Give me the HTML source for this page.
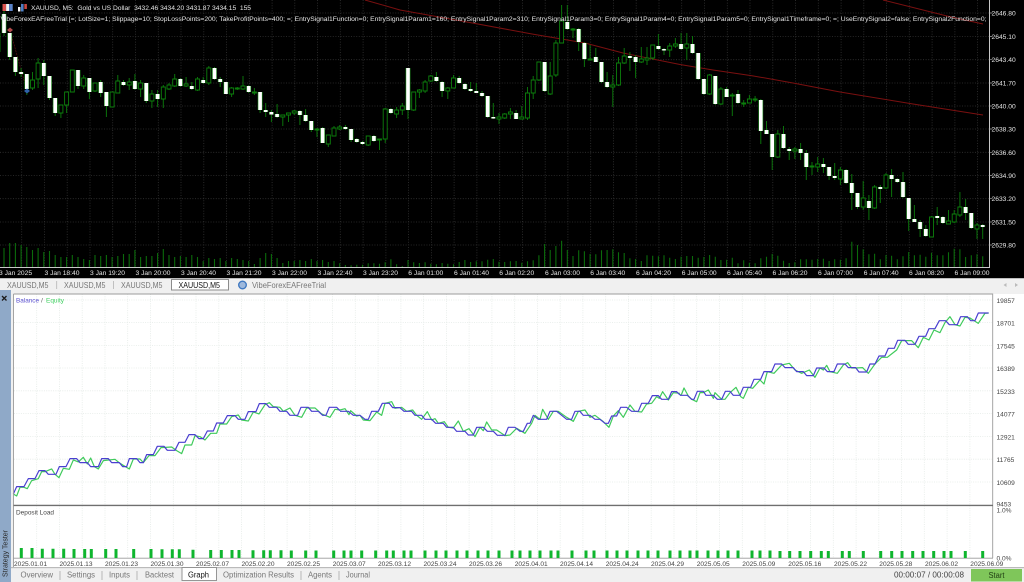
<!DOCTYPE html>
<html><head><meta charset="utf-8"><title>Strategy Tester</title>
<style>
html,body{margin:0;padding:0;background:#f0f0f0;width:1024px;height:582px;overflow:hidden}
svg{display:block;filter:blur(.25px)}
text{font-family:"Liberation Sans",sans-serif}
.c{font-size:6.7px;fill:#e6e6e6}
.a{font-size:6.6px;fill:#444}
.t{font-size:8px;fill:#777}
</style></head><body>
<svg width="1024" height="582" viewBox="0 0 1024 582" xmlns="http://www.w3.org/2000/svg">
<defs>
<path id="w" d="M4 14V33M9.7 33V57M15.4 57V72M21.1 72V74M26.8 74V89M43.8 63V76M49.5 76V98M55.2 98V113M78 70V86M89.4 78V92M100.7 82V93M106.4 92V106M123.5 82V85M134.9 81V89M146.3 83V101M157.6 94V99M180.4 79V86M191.8 86V89M203.2 80V83M214.5 68V79M220.2 79V82M225.9 82V94M248.7 86V92M260.1 92V110M265.7 110V112M271.4 112V114.5M277.1 114V117M299.9 111V115M305.6 115V121M311.3 121V130M322.6 128V143M345.4 127V129M351.1 129V140M356.8 139V142M362.5 142V144M373.9 136V141M390.9 109V113M408 68V110M436.4 77V81M442.1 82V91M459.2 78V83M464.9 84V89M470.6 89V91M476.3 91V93M482 93V96M487.7 96V117M493.3 117V118.5M516.1 113V119M544.6 62V91M567.3 22V29M578.7 29V42M584.4 43V59M595.8 57V62M601.5 62V82M607.1 82V87M629.9 56V58M635.6 57V62M658.4 46V49M664 49V50.5M681.1 44V49M692.5 44V53M698.2 53V79M703.9 79V94M715.3 76V104M726.6 89V97M738 94V103M760.8 100V131M766.5 130V134M772.2 134V157M783.5 134V148M789.2 149V151M800.6 149V153M806.3 153V167M823.4 164V167M829.1 167V176M834.7 176V178M846.1 170V183M851.8 183V193M857.5 193V207M868.9 201V208M880.3 187V189M891.6 175V179M897.3 179V182M903 182V197M908.7 198V219M914.4 219V222M920.1 222V229M925.8 229V236M937.2 216V218M942.9 217V223M965.6 207V213M971.3 213V228M982.7 225V227"/>
</defs>
<!-- chart -->
<rect x="0" y="0" width="1024" height="278" fill="#000"/>
<path fill="none" stroke="#333" stroke-width=".8" stroke-dasharray="1 1.6" d="M0 13H989M0 36.5H989M0 59.7H989M0 83H989M0 106H989M0 129H989M0 152.3H989M0 175.5H989M0 198.7H989M0 222H989M0 245H989M21.7 0V267M44.5 0V267M67.2 0V267M90 0V267M112.7 0V267M135.5 0V267M158.3 0V267M181 0V267M203.8 0V267M226.5 0V267M249.3 0V267M272.1 0V267M294.8 0V267M317.6 0V267M340.3 0V267M363.1 0V267M385.9 0V267M408.6 0V267M431.4 0V267M454.1 0V267M476.9 0V267M499.7 0V267M522.4 0V267M545.2 0V267M567.9 0V267M590.7 0V267M613.5 0V267M636.2 0V267M659 0V267M681.7 0V267M704.5 0V267M727.3 0V267M750 0V267M772.8 0V267M795.5 0V267M818.3 0V267M841.1 0V267M863.8 0V267M886.6 0V267M909.3 0V267M932.1 0V267M954.9 0V267M977.6 0V267"/>
<!-- volumes -->
<path fill="none" stroke="#0b6b0b" stroke-width="1.1" d="M4 248V267.5M9.7 243V267.5M15.4 243V267.5M21.1 245V267.5M26.8 247V267.5M32.5 250V267.5M38.1 248V267.5M43.8 252V267.5M49.5 251V267.5M55.2 255V267.5M60.9 257V267.5M66.6 257V267.5M72.3 255V267.5M78 257V267.5M83.7 259V267.5M89.4 260V267.5M95 255V267.5M100.7 256V267.5M106.4 255V267.5M112.1 257V267.5M117.8 256V267.5M123.5 254V267.5M129.2 254V267.5M134.9 250V267.5M140.6 257V267.5M146.3 256V267.5M151.9 256V267.5M157.6 253V267.5M163.3 249V267.5M169 255V267.5M174.7 257V267.5M180.4 256V267.5M186.1 257V267.5M191.8 255V267.5M197.5 257V267.5M203.2 261V267.5M208.8 258V267.5M214.5 259V267.5M220.2 258V267.5M225.9 261V267.5M231.6 258V267.5M237.3 259V267.5M243 260V267.5M248.7 261V267.5M254.4 264V267.5M260.1 258V267.5M265.7 253V267.5M271.4 254V267.5M277.1 258V267.5M282.8 263V267.5M288.5 261V267.5M294.2 261V267.5M299.9 260V267.5M305.6 261V267.5M311.3 259V267.5M317 261V267.5M322.6 260V267.5M328.3 262V267.5M334 261V267.5M339.7 263.3V267.5M345.4 265V267.5M351.1 265.3V267.5M356.8 264.7V267.5M362.5 264.7V267.5M368.2 263.3V267.5M373.9 263.3V267.5M379.5 263.7V267.5M385.2 262.3V267.5M390.9 259.3V267.5M396.6 264.3V267.5M402.3 266V267.5M408 260V267.5M413.7 262.3V267.5M419.4 263V267.5M425.1 262.3V267.5M430.8 263.7V267.5M436.4 264.3V267.5M442.1 263V267.5M447.8 263.7V267.5M453.5 264.3V267.5M459.2 262V267.5M464.9 260V267.5M470.6 262V267.5M476.3 261.3V267.5M482 261.3V267.5M487.7 259.7V267.5M493.3 259V267.5M499 261.7V267.5M504.7 262V267.5M510.4 261.3V267.5M516.1 261V267.5M521.8 262.7V267.5M527.5 261.3V267.5M533.2 260.3V267.5M538.9 255.3V267.5M544.6 244V267.5M550.2 250V267.5M555.9 246V267.5M561.6 240.7V267.5M567.3 250V267.5M573 256V267.5M578.7 250.3V267.5M584.4 251.3V267.5M590.1 254V267.5M595.8 254.3V267.5M601.5 250.3V267.5M607.1 250V267.5M612.8 249.3V267.5M618.5 252.3V267.5M624.2 253V267.5M629.9 258.3V267.5M635.6 259V267.5M641.3 261V267.5M647 255.3V267.5M652.7 255.7V267.5M658.4 256.3V267.5M664 255.3V267.5M669.7 257.7V267.5M675.4 259V267.5M681.1 256.7V267.5M686.8 256V267.5M692.5 256V267.5M698.2 257.7V267.5M703.9 257V267.5M709.6 255V267.5M715.3 256.7V267.5M720.9 260V267.5M726.6 259.7V267.5M732.3 257.7V267.5M738 263.3V267.5M743.7 260.3V267.5M749.4 262.7V267.5M755.1 263.3V267.5M760.8 258.3V267.5M766.5 256.7V267.5M772.2 254V267.5M777.8 255.7V267.5M783.5 260.7V267.5M789.2 263V267.5M794.9 262.3V267.5M800.6 259.3V267.5M806.3 259.3V267.5M812 259.7V267.5M817.7 259V267.5M823.4 258.7V267.5M829.1 261V267.5M834.7 259.3V267.5M840.4 259.7V267.5M846.1 258.3V267.5M851.8 241.7V267.5M857.5 245V267.5M863.2 249.3V267.5M868.9 254.3V267.5M874.6 253.7V267.5M880.3 259.3V267.5M886 255V267.5M891.6 255.7V267.5M897.3 259.3V267.5M903 256.3V267.5M908.7 252V267.5M914.4 255.3V267.5M920.1 254.7V267.5M925.8 256.7V267.5M931.5 252.7V267.5M937.2 255.3V267.5M942.9 255.3V267.5M948.5 252.3V267.5M954.2 248.7V267.5M959.9 249.3V267.5M965.6 257V267.5M971.3 255.3V267.5M977 254.3V267.5M982.7 256.3V267.5"/>
<!-- red lines -->
<path fill="none" stroke="#7a1010" stroke-width="1" d="M365 0L400 10L467 22L532 34L585 43L623 53L680 64.5L713 70L752 75.7L793 83L840 92L913 104L983 115M883 0L947 16L983 24"/>
<path fill="none" stroke="#6a1515" stroke-width=".6" stroke-dasharray="2 1" d="M10 30L27 91"/>
<!-- wicks -->
<path fill="none" stroke="#0a720a" stroke-width="1" d="M0 33V52M4 10V36M9.7 33V60M15.4 57V76M21.1 68V77M26.8 74V95M32.5 72V90M38.1 58V88M43.8 60V85M49.5 76V100M55.2 98V116M60.9 105V118M66.6 92V113M72.3 70V92M78 70V89M83.7 75V89M89.4 78V99M95 83V92M100.7 80V97M106.4 92V117M112.1 92V107M117.8 75V93M123.5 80V86M129.2 78V90M134.9 74V90M140.6 80V97M146.3 83V103M151.9 90V108M157.6 90V107M163.3 85V108M169 83V90M174.7 74V87M180.4 78V87M186.1 77V87M191.8 82V90M197.5 77V91M203.2 77V84M208.8 66V85M214.5 67V80M220.2 77V87M225.9 82V94M231.6 87V97M237.3 87V90M243 76V90M248.7 85V93M254.4 88V95M260.1 92V113M265.7 103V117M271.4 110V122M277.1 104V118M282.8 115V126M288.5 113V122M294.2 110V115M299.9 110V125M305.6 109V122M311.3 121V132M317 128V137M322.6 127V143M328.3 135V147M334 126V136M339.7 125V130M345.4 125V130M351.1 129V142M356.8 138V143M362.5 141V145M368.2 136V146M373.9 135V142M379.5 139V150M385.2 108V143M390.9 108V114M396.6 107V118M402.3 103V115M408 68V119M413.7 92V111M419.4 89V98M425.1 80V93M430.8 75V82M436.4 72V82M442.1 81V97M447.8 87V99M453.5 75V88M459.2 76V84M464.9 83V90M470.6 82V92M476.3 83V93M482 91V97M487.7 96V118M493.3 103V119M499 113V124M504.7 113V119M510.4 108V119M516.1 110V119M521.8 106V119M527.5 87V120M533.2 76V99M538.9 62V81M544.6 62V92M550.2 62V95M555.9 40V77M561.6 5V43M567.3 5V30M573 28V38M578.7 28V51M584.4 42V67M590.1 45V60M595.8 48V62M601.5 62V83M607.1 72V88M612.8 75V107M618.5 57V86M624.2 48V64M629.9 52V71M635.6 55V78M641.3 47V63M647 47V65M652.7 45V60M658.4 34V50M664 48V55M669.7 43V57M675.4 38V48M681.1 33V50M686.8 33V60M692.5 36V54M698.2 53V80M703.9 79V95M709.6 74V95M715.3 76V105M720.9 87V105M726.6 87V97M732.3 93V116M738 90V104M743.7 100V107M749.4 95V103M755.1 96V102M760.8 99V144M766.5 121V134M772.2 134V170M777.8 130V158M783.5 126V149M789.2 147V160M794.9 147V159M800.6 143V160M806.3 150V180M812 162V175M817.7 157V172M823.4 158V173M829.1 167V180M834.7 163V180M840.4 167V185M846.1 169V184M851.8 174V210M857.5 193V209M863.2 181V210M868.9 195V220M874.6 185V209M880.3 185V203M886 173V189M891.6 169V197M897.3 178V183M903 172V198M908.7 198V231M914.4 205V222M920.1 220V237M925.8 225V237M931.5 216V237M937.2 207V225M942.9 216V224M948.5 210V224M954.2 210V223M959.9 192V217M965.6 199V220M971.3 213V229M977 223V239M982.7 224V239"/>
<!-- bullish hollow bodies -->
<path fill="#000" stroke="#0c7f0c" stroke-width=".9" d="M32.5 80h2V88h-4V80zM38.1 63h2V79h-4V63zM60.9 105h2V113h-4V105zM66.6 92h2V105h-4V92zM72.3 70h2V92h-4V70zM83.7 78h2V86h-4V78zM95 83h2V91h-4V83zM112.1 92h2V107h-4V92zM117.8 81h2V93h-4V81zM129.2 82h2V85h-4V82zM140.6 83h2V89h-4V83zM151.9 94h2V101h-4V94zM163.3 87h2V99h-4V87zM169 85h2V89h-4V85zM174.7 79h2V86h-4V79zM186.1 84h2V86h-4V84zM197.5 79h2V90h-4V79zM208.8 68h2V83h-4V68zM231.6 88h2V94h-4V88zM237.3 88h2V89h-4V88zM243 86h2V89h-4V86zM254.4 92h2V93h-4V92zM282.8 115h2V117h-4V115zM288.5 113h2V115h-4V113zM294.2 111h2V113h-4V111zM317 129h2V130h-4V129zM328.3 135h2V144h-4V135zM334 128h2V136h-4V128zM339.7 127h2V129h-4V127zM368.2 136h2V145h-4V136zM379.5 139h2V140h-4V139zM385.2 109h2V139h-4V109zM396.6 110h2V114h-4V110zM402.3 106h2V110h-4V106zM413.7 92h2V110h-4V92zM419.4 90h2V92h-4V90zM425.1 82h2V91h-4V82zM430.8 76h2V81h-4V76zM447.8 88h2V91h-4V88zM453.5 78h2V88h-4V78zM499 117h2V119h-4V117zM504.7 114h2V118h-4V114zM510.4 112h2V114h-4V112zM521.8 117h2V119h-4V117zM527.5 93h2V118h-4V93zM533.2 80h2V93h-4V80zM538.9 62h2V80h-4V62zM550.2 76h2V94h-4V76zM555.9 43h2V75h-4V43zM561.6 21h2V43h-4V21zM573 29h2V30h-4V29zM590.1 59h2V60h-4V59zM612.8 85h2V87h-4V85zM618.5 63h2V85h-4V63zM624.2 56h2V63h-4V56zM641.3 59h2V62h-4V59zM647 58h2V60h-4V58zM652.7 45h2V58h-4V45zM669.7 46h2V50h-4V46zM675.4 44h2V46h-4V44zM686.8 44h2V48h-4V44zM709.6 75h2V94h-4V75zM720.9 89h2V104h-4V89zM732.3 95h2V96h-4V95zM743.7 103h2V104h-4V103zM749.4 99h2V103h-4V99zM755.1 99h2V100h-4V99zM777.8 134h2V157h-4V134zM794.9 149h2V151h-4V149zM812 166h2V167h-4V166zM817.7 164h2V167h-4V164zM840.4 170h2V179h-4V170zM863.2 198h2V207h-4V198zM874.6 187h2V208h-4V187zM886 175h2V188h-4V175zM931.5 217h2V237h-4V217zM948.5 221h2V224h-4V221zM954.2 214h2V222h-4V214zM959.9 207h2V215h-4V207zM977 225h2V229h-4V225z"/>
<!-- bearish white bodies -->
<use href="#w" fill="none" stroke="#1d8f1d" stroke-width="4.8"/>
<use href="#w" fill="none" stroke="#fff" stroke-width="3.6"/>
<!-- markers -->
<path d="M10 27.5l3 2.5-3 2.5-3-2.5z" fill="#b24a4a"/>
<path d="M27 88.5l3 2.5-3 2.5-3-2.5z" fill="#2f62a8"/>
<!-- axes -->
<path d="M989.5 0V267.5H0" fill="none" stroke="#c8c8c8" stroke-width="1"/>
<path d="M989.5 13h3M989.5 36.5h3M989.5 59.7h3M989.5 83h3M989.5 106h3M989.5 129h3M989.5 152.3h3M989.5 175.5h3M989.5 198.7h3M989.5 222h3M989.5 245h3" stroke="#aaa" stroke-width=".7"/>
<!-- header icons + text -->
<rect x="2.5" y="4" width="3.6" height="7" fill="#d9534f"/><rect x="6.1" y="4" width="3" height="7" fill="#f2f2f2"/><rect x="9.1" y="4" width="3.6" height="7" fill="#5b83c9"/>
<rect x="18" y="7" width="2.4" height="4.5" fill="#fff"/><rect x="21" y="4" width="2.6" height="7.5" fill="#4d7fc4"/><rect x="24.3" y="4" width="2.6" height="5" fill="#c9463f"/>
<text class="c" x="31" y="10" textLength="220" lengthAdjust="spacingAndGlyphs" xml:space="preserve">XAUUSD, M5:  Gold vs US Dollar  3432.46 3434.20 3431.87 3434.15  155</text>
<text class="c" x="0.5" y="21" textLength="986" lengthAdjust="spacingAndGlyphs">VibeForexEAFreeTrial [=; LotSize=1; Slippage=10; StopLossPoints=200; TakeProfitPoints=400; =; EntrySignal1Function=0; EntrySignal1Param1=160; EntrySignal1Param2=310; EntrySignal1Param3=0; EntrySignal1Param4=0; EntrySignal1Param5=0; EntrySignal1Timeframe=0; =; UseEntrySignal2=false; EntrySignal2Function=0;</text>
<!-- price labels -->
<g class="c" style="font-size:6.7px;fill:#e6e6e6">
<text x="991.5" y="15.5">2646.80</text><text x="991.5" y="39">2645.10</text><text x="991.5" y="62.2">2643.40</text><text x="991.5" y="85.5">2641.70</text><text x="991.5" y="108.5">2640.00</text><text x="991.5" y="131.5">2638.30</text><text x="991.5" y="154.8">2636.60</text><text x="991.5" y="178">2634.90</text><text x="991.5" y="201.2">2633.20</text><text x="991.5" y="224.5">2631.50</text><text x="991.5" y="247.5">2629.80</text>
</g>
<!-- time labels -->
<g style="font-size:6.7px;fill:#e6e6e6">
<text x="-1" y="275">3 Jan 2025</text><text x="44.5" y="275">3 Jan 18:40</text><text x="90" y="275">3 Jan 19:20</text><text x="135.5" y="275">3 Jan 20:00</text><text x="181" y="275">3 Jan 20:40</text><text x="226.5" y="275">3 Jan 21:20</text><text x="272" y="275">3 Jan 22:00</text><text x="317.5" y="275">3 Jan 22:40</text><text x="363" y="275">3 Jan 23:20</text><text x="408.3" y="275">6 Jan 01:00</text><text x="454" y="275">6 Jan 01:40</text><text x="499.3" y="275">6 Jan 02:20</text><text x="545" y="275">6 Jan 03:00</text><text x="590.3" y="275">6 Jan 03:40</text><text x="636" y="275">6 Jan 04:20</text><text x="681.7" y="275">6 Jan 05:00</text><text x="727" y="275">6 Jan 05:40</text><text x="772.5" y="275">6 Jan 06:20</text><text x="818" y="275">6 Jan 07:00</text><text x="863.7" y="275">6 Jan 07:40</text><text x="909" y="275">6 Jan 08:20</text><text x="954.5" y="275">6 Jan 09:00</text>
</g>
<!-- chart tabs -->
<rect x="0" y="278" width="1024" height="16" fill="#f0f0f0"/>
<path d="M0 278.5H1024" stroke="#bdbdbd" stroke-width="1"/>
<text class="t" x="7" y="288" textLength="41.5" lengthAdjust="spacingAndGlyphs">XAUUSD,M5</text>
<text class="t" x="64" y="288" textLength="41.5" lengthAdjust="spacingAndGlyphs">XAUUSD,M5</text>
<text class="t" x="121" y="288" textLength="41.5" lengthAdjust="spacingAndGlyphs">XAUUSD,M5</text>
<path d="M56.7 281V289M113.5 281V289" stroke="#b5b5b5" stroke-width=".8"/>
<rect x="171.5" y="279.5" width="57" height="10.5" fill="#fff" stroke="#8c8c8c" stroke-width="1"/>
<text x="178.5" y="288" font-size="8" fill="#111" textLength="41.5" lengthAdjust="spacingAndGlyphs">XAUUSD,M5</text>
<circle cx="242.5" cy="285" r="3.8" fill="#9db8dc" stroke="#3f78c0" stroke-width="1.4"/>
<text class="t" x="252" y="288" textLength="74" lengthAdjust="spacingAndGlyphs">VibeForexEAFreeTrial</text>
<path d="M1006.5 283v4l-3-2zM1015 283v4l3-2z" fill="#bbb"/>
<!-- side panel -->
<rect x="0" y="290" width="11" height="292" fill="#8fa9c8"/>
<path d="M2 296l4.5 4.5M6.5 296L2 300.5" stroke="#1c1c1c" stroke-width="1.3" fill="none"/>
<text x="0" y="0" transform="translate(7.5,577) rotate(-90)" font-size="7.6" fill="#2a2a2a" textLength="47" lengthAdjust="spacingAndGlyphs">Strategy Tester</text>
<!-- graph -->
<rect x="13.5" y="294" width="979" height="273" fill="#fff"/>
<rect x="993" y="294" width="31" height="273" fill="#fff"/>
<path fill="none" stroke="#e4eae6" stroke-width=".8" stroke-dasharray="1 1.3" d="M14 300H992M14 322.5H992M14 345.4H992M14 368H992M14 390.8H992M14 413.6H992M14 436.4H992M14 459.2H992M14 482H992M36.7 294V558M59.5 294V558M82.2 294V558M105 294V558M127.7 294V558M150.5 294V558M173.3 294V558M196 294V558M218.8 294V558M241.5 294V558M264.3 294V558M287.1 294V558M309.8 294V558M332.6 294V558M355.3 294V558M378.1 294V558M400.9 294V558M423.6 294V558M446.4 294V558M469.1 294V558M491.9 294V558M514.7 294V558M537.4 294V558M560.2 294V558M582.9 294V558M605.7 294V558M628.5 294V558M651.2 294V558M674 294V558M696.7 294V558M719.5 294V558M742.3 294V558M765 294V558M787.8 294V558M810.5 294V558M833.3 294V558M856.1 294V558M878.8 294V558M901.6 294V558M924.3 294V558M947.1 294V558M969.9 294V558"/>
<!-- equity -->
<g fill="none" stroke="#3fca5b" stroke-width="3.6" stroke-linejoin="round">
<path transform="translate(0,290) scale(.3333)" d="M40 612L50 618L60 592L72 592L82 596L95 572L115 566L125 545L135 545L155 537L165 553L177 563L190 535L208 538L220 510L235 516L250 502L262 522L272 504L283 530L295 537L310 512L345 508L360 520L388 537L400 507L420 507L430 518L447 497L465 497L483 473L515 471L530 482L545 491L555 465L575 465L585 437L600 440L615 450L632 430L650 430L660 402L680 402L695 380L715 375L725 390L745 393L760 366L777 372L795 344L808 338L820 350L840 352L850 364L870 354L885 376L905 382L920 354L945 354L965 372L990 382L1005 358L1020 360"/>
<path transform="translate(340,340) scale(.3333)" d="M0 210L15 206L27 224L32 212L50 228L60 226L70 240L90 242L110 216L125 226L135 190L155 185L165 205L185 202L200 214L218 210L230 226L245 238L262 215L275 240L285 236L295 250L313 245L325 262L340 264L355 243L370 274L387 266L405 290L420 262L430 272L440 246L455 270L470 270L495 287L510 285L530 265L555 280L575 250L585 226L600 238L608 208L625 238L640 214L655 214L680 232L700 244L715 214L735 210L750 232L765 226L790 245L807 262L820 228L835 212L850 232L870 195L885 214L905 216L920 192L935 190L950 170L958 175L968 155L985 180L1000 158L1020 160"/>
<path transform="translate(680,290) scale(.3333)" d="M0 316L5 312L12 294L25 318L35 328L50 335L60 308L70 308L85 300L100 325L105 308L125 328L135 328L150 308L168 292L182 320L190 325L205 292L218 295L240 270L252 282L262 245L282 250L305 225L328 220L345 240L365 250L388 240L405 262L420 234L430 240L440 226L450 245L472 250L490 225L503 218L515 234L527 234L548 233L565 250L585 222L605 202L622 202L650 180L665 152L695 152L715 173L730 142L747 150L762 120L780 128L795 98L810 80L825 104L840 108L855 82L870 84L895 100L915 70L926 69"/>
</g>
<!-- balance -->
<g fill="none" stroke="#4a3fd0" stroke-width="3.6" stroke-linejoin="round">
<path transform="translate(0,290) scale(.3333)" d="M40 612L50 590L72 590L85 566L105 566L117 542L135 542L145 553L168 553L178 530L198 530L210 506L230 506L240 518L262 518L272 530L295 530L305 506L325 506L335 518L358 518L368 530L380 530L388 506L410 506L420 518L430 518L440 494L460 494L472 469L492 469L502 481L525 481L537 457L555 457L567 434L585 434L597 446L610 446L622 423L640 423L650 399L670 399L682 377L705 377L715 388L735 388L745 365L768 365L778 341L798 341L808 352L830 352L840 364L860 364L870 376L893 376L903 352L925 352L935 364L955 364L968 376L978 376L988 352L1010 352L1020 362"/>
<path transform="translate(340,340) scale(.3333)" d="M0 214L25 214L40 226L60 226L75 238L85 238L95 214L115 214L127 190L148 190L158 203L180 203L192 214L215 214L225 226L245 226L255 238L275 238L287 250L310 250L320 262L340 262L350 274L375 274L385 285L400 285L410 262L430 262L442 274L460 274L472 286L495 286L505 262L525 262L540 274L550 274L562 250L570 250L580 226L595 238L620 238L630 214L650 214L665 226L680 238L695 238L705 214L720 214L730 226L750 226L765 238L780 238L795 250L805 250L815 228L830 228L842 202L860 202L875 214L895 214L905 190L925 190L937 167L955 167L965 178L985 178L995 155L1010 155L1020 165"/>
<path transform="translate(680,290) scale(.3333)" d="M0 316L22 316L35 328L42 328L52 304L70 304L78 316L100 316L112 328L125 328L136 304L150 304L160 316L180 316L190 292L212 292L222 268L242 268L252 245L275 245L285 222L305 222L315 233L340 233L350 245L370 245L380 257L400 257L410 234L432 234L442 245L462 245L472 222L495 222L505 233L527 233L537 246L560 246L570 222L585 222L597 198L615 198L625 175L643 175L653 151L675 151L685 163L705 163L717 139L737 139L747 116L765 116L778 92L797 92L808 104L832 104L842 80L862 80L872 92L885 92L895 69L926 69"/>
</g>
<text x="16" y="302.5" font-size="6.8" fill="#5a4fd0" textLength="23" lengthAdjust="spacingAndGlyphs">Balance</text>
<text x="41" y="302.5" font-size="6.8" fill="#666">/</text>
<text x="46" y="302.5" font-size="6.8" fill="#3ecf5f" textLength="18" lengthAdjust="spacingAndGlyphs">Equity</text>
<!-- separator & frame -->
<path d="M13.5 294H992.7V558" fill="none" stroke="#9b9b9b" stroke-width=".9"/>
<path d="M13.5 294V567" stroke="#9b9b9b" stroke-width=".9"/>
<path d="M13.5 505.4H993" stroke="#6f6f6f" stroke-width="1.4"/>
<path d="M13.5 558.2H993" stroke="#9a9a9a" stroke-width=".8"/>
<text x="16" y="514.5" font-size="6.8" fill="#444" textLength="38" lengthAdjust="spacingAndGlyphs">Deposit Load</text>
<!-- load bars -->
<path fill="none" stroke="#0fb52e" stroke-width="3" d="M21.3 548V558M32 548V558M42.3 548.8V558M53 548.8V558M63.7 548.8V558M74 549V558M84.7 549V558M91.3 549V558M105.7 549V558M116 549V558M133.7 549V558M151 549V558M162 549.3V558M172.3 549.3V558M179.3 549.3V558M193 549.7V558M210.7 550V558M221.3 550V558M232 550V558M239 550V558M253 550.3V558M263.7 550.3V558M270.3 550.3V558M281 550.3V558M291.3 550.5V558M305.7 550.5V558M316 550.5V558M333.7 550.5V558M344 550.5V558M351 550.5V558M361.7 550.5V558M375.7 550.5V558M386.7 550.5V558M393.3 550.5V558M404 550.5V558M411 550.5V558M425 550.5V558M436 550.5V558M446 550.5V558M457 550.5V558M467 550.5V558M478 550.5V558M488 550.5V558M499 550.5V558M512 550.5V558M520 550.5V558M530 550.5V558M540 550.5V558M551 550.5V558M558 550.5V558M572 550.5V558M586 550.5V558M594 550.5V558M607 550.5V558M617 550.5V558M627 550.5V558M638 550.5V558M648 550.5V558M658 550.5V558M670 550.5V558M680 550.5V558M690 550.5V558M697 550.5V558M708 550.5V558M718 550.5V558M728 550.5V558M738 550.5V558M752 550.5V558M760 550.5V558M770 550.5V558M780 551V558M789.7 551V558M800 551V558M810.7 551V558M821.3 551V558M828.3 551V558M842.3 551V558M849.3 551V558M863.3 551V558M880.7 551V558M891.7 551V558M902 551V558M912.7 551V558M923 551V558M933.7 551V558M944 551V558M951 551V558M965.3 551V558M982.7 551V558"/>
<!-- right axis labels -->
<g font-size="6.6" fill="#444">
<text x="996.5" y="303">19857</text><text x="996.5" y="325.5">18701</text><text x="996.5" y="348.4">17545</text><text x="996.5" y="371">16389</text><text x="996.5" y="393.8">15233</text><text x="996.5" y="416.6">14077</text><text x="996.5" y="439.4">12921</text><text x="996.5" y="462.2">11765</text><text x="996.5" y="485">10609</text><text x="996.5" y="506.5">9453</text>
<rect x="995" y="506.4" width="25" height="8" fill="#fff"/>
<text x="996.5" y="512.6">1.0%</text><text x="996.5" y="560.5">0.0%</text>
</g>
<!-- date labels -->
<g font-size="6.6" fill="#444">
<text x="14" y="566">2025.01.01</text><text x="59.5" y="566">2025.01.13</text><text x="105" y="566">2025.01.23</text><text x="150.5" y="566">2025.01.30</text><text x="196" y="566">2025.02.07</text><text x="241.5" y="566">2025.02.20</text><text x="287" y="566">2025.02.25</text><text x="332.7" y="566">2025.03.07</text><text x="378" y="566">2025.03.12</text><text x="423.5" y="566">2025.03.24</text><text x="469" y="566">2025.03.26</text><text x="514.7" y="566">2025.04.01</text><text x="560" y="566">2025.04.14</text><text x="605.7" y="566">2025.04.24</text><text x="651" y="566">2025.04.29</text><text x="696.7" y="566">2025.05.05</text><text x="742.3" y="566">2025.05.09</text><text x="788.3" y="566">2025.05.16</text><text x="834" y="566">2025.05.22</text><text x="879.3" y="566">2025.05.28</text><text x="925" y="566">2025.06.02</text><text x="970.3" y="566">2025.06.09</text>
</g>
<!-- bottom tabs -->
<rect x="11" y="567.5" width="1013" height="14.5" fill="#f0f0f0"/>
<path d="M11 567.7H1024" stroke="#a8a8a8" stroke-width=".8"/>
<path d="M60 571V580M102 571V580M137 571V580M301 571V580M339 571V580" stroke="#a9a9a9" stroke-width=".8"/>
<rect x="182" y="567.5" width="34.5" height="13" fill="#fff" stroke="#8b8b8b" stroke-width=".9"/>
<g class="t">
<text class="t" x="20.5" y="577.5" textLength="32.5" lengthAdjust="spacingAndGlyphs">Overview</text>
<text class="t" x="67" y="577.5" textLength="28" lengthAdjust="spacingAndGlyphs">Settings</text>
<text class="t" x="109" y="577.5" textLength="21" lengthAdjust="spacingAndGlyphs">Inputs</text>
<text class="t" x="145" y="577.5" textLength="29" lengthAdjust="spacingAndGlyphs">Backtest</text>
<text class="t" x="223" y="577.5" textLength="71" lengthAdjust="spacingAndGlyphs">Optimization Results</text>
<text class="t" x="308" y="577.5" textLength="24" lengthAdjust="spacingAndGlyphs">Agents</text>
<text class="t" x="346" y="577.5" textLength="24" lengthAdjust="spacingAndGlyphs">Journal</text>
</g>
<text x="188" y="577.5" font-size="8" fill="#111" textLength="21" lengthAdjust="spacingAndGlyphs">Graph</text>
<text x="894" y="577.5" font-size="8" fill="#444" textLength="70" lengthAdjust="spacingAndGlyphs">00:00:07 / 00:00:08</text>
<rect x="971" y="569" width="51" height="12.5" fill="#7fc65a"/>
<text x="988.5" y="578" font-size="8" fill="#1f3d12" textLength="16" lengthAdjust="spacingAndGlyphs">Start</text>
</svg>
</body></html>
